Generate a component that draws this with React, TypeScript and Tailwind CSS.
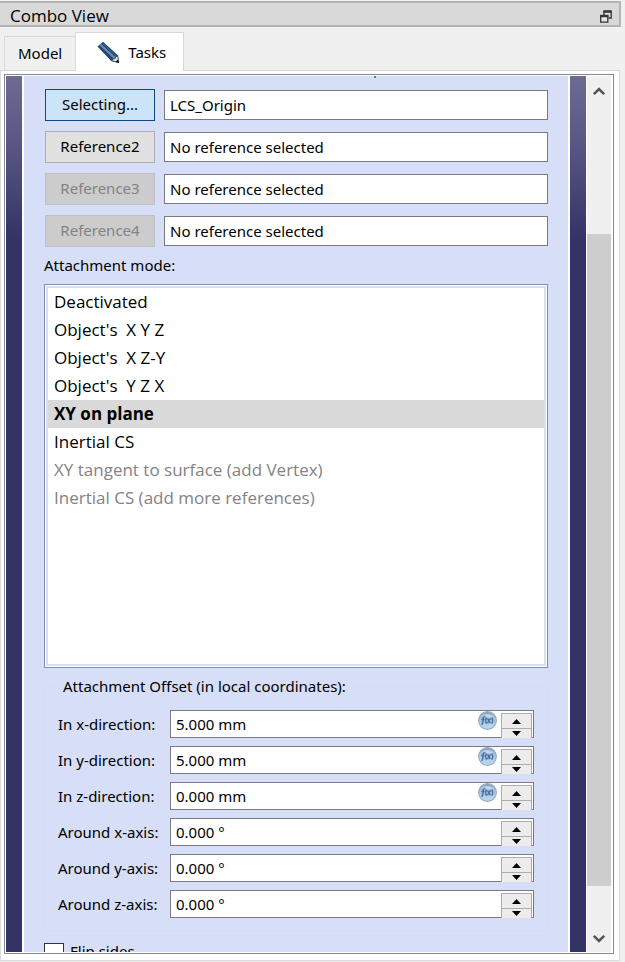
import { useState } from 'react';

const references = [
  { button: 'Selecting...', value: 'LCS_Origin', look: 'border-[#0c4a86] bg-[#cce4f7] text-black' },
  { button: 'Reference2', value: 'No reference selected', look: 'border-[#adadb5] bg-[#e1e1e1] text-black' },
  { button: 'Reference3', value: 'No reference selected', look: 'border-[#bfbfc8] bg-[#cccccc] text-[#838383]', disabled: true },
  { button: 'Reference4', value: 'No reference selected', look: 'border-[#bfbfc8] bg-[#cccccc] text-[#838383]', disabled: true },
];

const modes = [
  { label: 'Deactivated' },
  { label: "Object's  X Y Z" },
  { label: "Object's  X Z-Y" },
  { label: "Object's  Y Z X" },
  { label: 'XY on plane' },
  { label: 'Inertial CS' },
  { label: 'XY tangent to surface (add Vertex)', muted: true },
  { label: 'Inertial CS (add more references)', muted: true },
];

const offsets = [
  { id: 'x-dir', label: 'In x-direction:', value: '5.000 mm', expression: true },
  { id: 'y-dir', label: 'In y-direction:', value: '5.000 mm', expression: true },
  { id: 'z-dir', label: 'In z-direction:', value: '0.000 mm', expression: true },
  { id: 'x-axis', label: 'Around x-axis:', value: '0.000 °' },
  { id: 'y-axis', label: 'Around y-axis:', value: '0.000 °' },
  { id: 'z-axis', label: 'Around z-axis:', value: '0.000 °' },
];

function RestoreIcon() {
  return (
    <svg width="12" height="13" viewBox="0 0 12 13" fill="none" stroke="#333" aria-hidden="true">
      <path d="M4 5V1.5h7.2V8H8.5" strokeWidth="1.3" />
      <path d="M3.4 1.5h8.2" strokeWidth="2.4" />
      <path d="M.7 6h7.1v6.2H.7z" fill="#e4e4e4" strokeWidth="1.3" />
      <path d="M.1 6h8.3" strokeWidth="2.4" />
    </svg>
  );
}

function PencilIcon() {
  return (
    <svg width="23" height="23" viewBox="0 0 23 23" aria-hidden="true">
      <path d="M0.5 5.5 6 .8 21 14.5 22 22 14.5 20.2z" fill="#1d3a5c" />
      <path d="M2.3 4.2 4 2.7 19 16.5 17 18z" fill="#5f8dba" />
      <path d="M4.6 2.4 6 1.6 20 14.7 18.8 15.7z" fill="#315a85" />
      <path d="M1.4 5.6 2.3 4.9 16.5 18.8 14.9 19.2z" fill="#2b4d73" />
      <path d="M15 19.7 16.6 17.7 18.2 17.6 18.9 15.9 20.7 15 21.5 21.4z" fill="#e8e9eb" stroke="#25364a" strokeWidth=".6" />
      <path d="M18.6 20.7 21 18.5 22 22z" fill="#0d131b" />
    </svg>
  );
}

function ExpressionIcon() {
  return (
    <svg width="19" height="19" viewBox="0 0 18 18" aria-hidden="true">
      <defs>
        <linearGradient id="fx-ball" x1="0" y1="0" x2="0" y2="1">
          <stop offset="0" stopColor="#7f9bbb" />
          <stop offset=".35" stopColor="#a5bfda" />
          <stop offset="1" stopColor="#b9dcf3" />
        </linearGradient>
      </defs>
      <circle cx="9" cy="9" r="8.4" fill="url(#fx-ball)" stroke="#93a9c0" strokeWidth="1" />
      <path d="M3 5.2Q9 .6 15 5.2 9 7 3 5.2z" fill="#d3e2f0" opacity=".7" />
      <g fill="none" stroke="#4a709f" strokeWidth="1.3">
        <path d="M7 5.4q-1.9-.4-2.1 1.6l-.5 4.7q-.2 1-1.3.8M3.2 8.1h3" />
        <path d="M8.1 6.3q-1.8 2.8 0 5.7M9 7l2.7 4.4M11.9 7 8.9 11.4M13 6.3q1.8 2.8 0 5.7" />
      </g>
    </svg>
  );
}

function Chevron({ down = false }: { down?: boolean }) {
  return (
    <svg width="12" height="10" viewBox="0 0 12 10" fill="none" stroke="#555" strokeWidth="2.6" aria-hidden="true">
      <path d={down ? 'M.8 1.8 6 7 11.2 1.8' : 'M.8 8.2 6 3 11.2 8.2'} />
    </svg>
  );
}

function Rail() {
  return <div className="w-4 shrink-0 bg-[linear-gradient(#6d6a94_0px,#5d5987_60px,#333366_164px)]" />;
}

function StepButtons({ name }: { name: string }) {
  return (
    <div className="-mb-px flex w-[31px] flex-col self-stretch pt-[2px]">
      <button type="button" aria-label={`Increase ${name}`} className="flex h-4 w-full items-center justify-center border border-[#adadad] bg-[#ececec]">
        <svg width="9" height="5" viewBox="0 0 9 5" aria-hidden="true"><path d="M0 5 4.5 0 9 5z" /></svg>
      </button>
      <button type="button" aria-label={`Decrease ${name}`} className="flex w-full flex-1 items-center justify-center border-x border-[#adadad] bg-[#ececec]">
        <svg width="9" height="5" viewBox="0 0 9 5" aria-hidden="true"><path d="M0 0 4.5 5 9 0z" /></svg>
      </button>
    </div>
  );
}

export default function App() {
  const [mode, setMode] = useState(4);

  return (
    <div className="flex h-screen flex-col overflow-hidden bg-[#f0f0f0] pt-px pb-px font-['Noto_Sans',sans-serif] text-[15px] text-black">
      <header className="mr-1 flex h-[26px] shrink-0 items-center justify-between border-2 border-l-0 border-[#b4b4b4] bg-[#d9d9d9] pr-[7px] pl-[10px]">
        <h1 className="pt-1 font-['Open_Sans',sans-serif] text-[17px] leading-5">Combo View</h1>
        <button type="button" aria-label="Float panel" className="pt-1"><RestoreIcon /></button>
      </header>

      <nav role="tablist" className="z-10 -mb-px flex h-11 shrink-0 items-end pl-1">
        <button type="button" role="tab" aria-selected="false" className="mb-px h-[34px] border border-r-0 border-b-0 border-[#d9d9d9] px-[13px]">Model</button>
        <button type="button" role="tab" aria-selected="true" className="flex h-[39px] items-center gap-2 border border-b-0 border-[#d9d9d9] bg-white pr-[17px] pl-[21px]">
          <PencilIcon />
          Tasks
        </button>
      </nav>

      <main className="mr-[5px] flex min-h-0 flex-1 flex-col border border-[#dadada] bg-white pt-[3px] pr-[5px] pb-[6px] pl-[3px]">
        <div className="flex min-h-0 flex-1 border border-[#828790] p-px">
          <Rail />
          <section className="relative mx-[2px] min-w-0 flex-1 overflow-hidden bg-[#d6dff7] px-5 pt-[13px]">
            <span className="absolute top-0 left-[350px] h-[2px] w-[2px] bg-[#3f9a58]" />
            <div className="flex flex-col gap-[10px]">
              {references.map((r) => (
                <div key={r.button} className="flex items-center gap-[9px] pl-px">
                  <button type="button" disabled={r.disabled} className={`h-8 w-[110px] shrink-0 border pb-[2px] ${r.look}`}>{r.button}</button>
                  <input readOnly aria-label={r.button} defaultValue={r.value} className="h-[30px] min-w-0 flex-1 border border-[#7a7a84] bg-white px-[5px] outline-none" />
                </div>
              ))}
            </div>

            <h2 id="mode-label" className="pt-[6px] pb-[7px] leading-6">Attachment mode:</h2>
            <div className="h-[384px] border border-[#828ea0] bg-white p-px">
              <ul role="listbox" aria-labelledby="mode-label" className="h-full border-2 border-[#d6dff7] font-['Open_Sans',sans-serif] text-[17px] leading-7">
                {modes.map((m, i) => (
                  <li
                    key={m.label}
                    role="option"
                    aria-selected={i === mode}
                    onClick={() => !m.muted && setMode(i)}
                    className={`px-[6px] whitespace-pre ${i === mode ? 'bg-[#d9d9d9] font-bold' : ''} ${m.muted ? 'text-[#838383]' : ''}`}
                  >
                    {m.label}
                  </li>
                ))}
              </ul>
            </div>

            <fieldset className="mt-[6px] border border-[#d5dcef] px-[13px] pb-[12px]">
              <legend className="px-[5px] leading-6">Attachment Offset (in local coordinates):</legend>
              <div className="flex flex-col gap-2 pt-3">
                {offsets.map((o) => (
                  <div key={o.id} className="flex items-center">
                    <label htmlFor={o.id} className="w-28 shrink-0 whitespace-nowrap">{o.label}</label>
                    <div className="flex h-7 min-w-0 flex-1 border border-[#7a7a84] bg-white pr-px">
                      <input id={o.id} defaultValue={o.value} className="min-w-0 flex-1 px-[5px] outline-none" />
                      {o.expression && (
                        <button type="button" aria-label={`Expression for ${o.label}`} className="mr-1 flex"><ExpressionIcon /></button>
                      )}
                      <StepButtons name={o.label} />
                    </div>
                  </div>
                ))}
              </div>
            </fieldset>

            <label className="mt-3 flex items-start gap-[6px] leading-4">
              <input type="checkbox" className="h-5 w-5 shrink-0 appearance-none border border-[#333] bg-white" />
              Flip sides
            </label>
          </section>
          <Rail />

          <aside className="mx-px flex w-6 shrink-0 flex-col bg-[#f0f0f0]">
            <button type="button" aria-label="Scroll up" className="flex h-[30px] shrink-0 items-center justify-center"><Chevron /></button>
            <div className="grow-[128] basis-0" />
            <div className="grow-[652] basis-0 bg-[#cdcdcd]" />
            <div className="grow-[40] basis-0" />
            <button type="button" aria-label="Scroll down" className="flex h-[26px] shrink-0 items-center justify-center"><Chevron down /></button>
          </aside>
        </div>
      </main>
    </div>
  );
}
